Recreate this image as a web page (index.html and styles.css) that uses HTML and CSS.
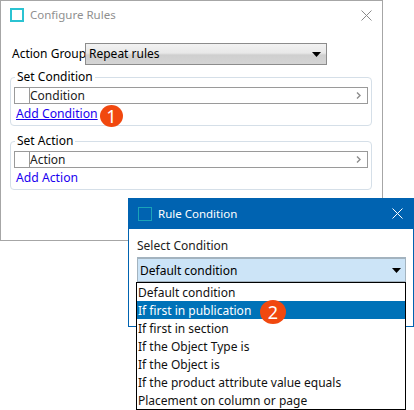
FILE: index.html
```html
<!DOCTYPE html>
<html lang="en">
<head>
<meta charset="utf-8">
<title>Configure Rules</title>
<link rel="stylesheet" href="styles.css">
</head>
<body>
<section class="window rules">
  <header class="titlebar">
    <span class="app-icon"></span>
    <span class="title">Configure Rules</span>
    <svg class="close" viewBox="0 0 11 11" width="11" height="11"><path d="M.5.5l10 10M10.5.5l-10 10" stroke="#8a8a8a" fill="none"/></svg>
  </header>
  <div class="content">
    <div class="group-row">
      <span class="group-label">Action Group</span>
      <div class="combo">
        <span>Repeat rules</span>
        <svg class="arrow" viewBox="0 0 9 5" width="9" height="5"><path d="M0 0h9L4.500 5z" fill="#000"/></svg>
      </div>
    </div>
    <fieldset class="set">
      <legend>Set Condition</legend>
      <div class="rule-row">
        <span class="cell"></span>
        <span class="rule-name">Condition</span>
        <svg class="chev" viewBox="0 0 5 7" width="5" height="7"><path d="M1 .5L4 3.500 1 6.500" stroke="#8c8c8c" stroke-width="1.400" fill="none"/></svg>
      </div>
      <a class="add underlined" href="#">Add Condition</a>
    </fieldset>
    <fieldset class="set">
      <legend>Set Action</legend>
      <div class="rule-row">
        <span class="cell"></span>
        <span class="rule-name">Action</span>
        <svg class="chev" viewBox="0 0 5 7" width="5" height="7"><path d="M1 .5L4 3.500 1 6.500" stroke="#8c8c8c" stroke-width="1.400" fill="none"/></svg>
      </div>
      <a class="add" href="#">Add Action</a>
    </fieldset>
  </div>
  <span class="badge badge-one">1</span>
</section>
<section class="window condition">
  <header class="titlebar blue">
    <span class="app-icon dark"></span>
    <span class="title">Rule Condition</span>
    <svg class="close" viewBox="0 0 11 11" width="11" height="11"><path d="M.5.500l10 10M10.500.500l-10 10" stroke="#fff" fill="none"/></svg>
  </header>
  <div class="condition-body">
    <div class="select-label">Select Condition</div>
    <div class="select-box">
      <span>Default condition</span>
      <svg class="arrow" viewBox="0 0 9 5" width="9" height="5"><path d="M0 0h9L4.500 5z" fill="#000"/></svg>
    </div>
  </div>
</section>
<ul class="dropdown">
  <li>Default condition</li>
  <li class="selected">If first in publication<span class="badge badge-two">2</span></li>
  <li>If first in section</li>
  <li>If the Object Type is</li>
  <li>If the Object is</li>
  <li>If the product attribute value equals</li>
  <li>Placement on column or page</li>
</ul>
</body>
</html>
```
FILE: styles.css
```css
* { box-sizing: border-box; }
html, body { margin: 0; padding: 0; }
body {
  position: relative;
  width: 414px;
  height: 410px;
  overflow: hidden;
  background: #fff;
  font: 12px/16px "Noto Sans", "Open Sans", sans-serif;
  color: #000;
}
.window { position: absolute; background: #fff; }
.rules {
  left: 0;
  top: 0;
  width: 383px;
  height: 241px;
  border: 1px solid #a6a6a6;
}
.titlebar {
  display: flex;
  align-items: center;
  height: 28px;
  padding: 0 9px;
  color: #8f8f8f;
}
.app-icon {
  width: 14px;
  height: 14px;
  border: 2px solid #2bc3d2;
  margin-right: 6px;
}
.app-icon.dark { border: 1px solid #1aa3b8; }
.title { flex: 1; font-size: 11.5px; }
.close { margin-right: 1px; }
.content { padding: 14px 9px 0; }
.group-row { display: flex; align-items: center; padding-left: 2px; }
.group-label { width: 73px; flex: none; white-space: nowrap; }
.combo {
  display: flex;
  align-items: center;
  justify-content: space-between;
  width: 242px;
  height: 22px;
  padding: 0 5px 0 3px;
  border: 1px solid #8c8c8c;
  background: linear-gradient(#f2f2f2, #e8e8e8 45%, #cfcfcf 55%, #d4d4d4);
}
.set {
  width: 362px;
  height: 56px;
  margin: 5px 0 0;
  padding: 3px 3px 0;
  border: 1px solid #d5dfe8;
  border-radius: 4px;
}
.set + .set { margin-top: 8px; }
legend { padding: 0 2px; margin-left: 1px; line-height: 14px; }
.rule-row {
  display: flex;
  align-items: center;
  height: 17px;
  border: 1px solid #9a9a9a;
}
.cell { width: 15px; height: 100%; border-right: 1px solid #9a9a9a; }
.rule-name { flex: 1; color: #222; }
.chev { margin-right: 6px; }
.add {
  display: block;
  margin: 1px 0 0 2px;
  font-size: 12.2px;
  line-height: 18px;
  color: #1a00f0;
  text-decoration: none;
}
.add.underlined { text-decoration: underline; }
.badge {
  position: absolute;
  display: flex;
  align-items: center;
  justify-content: center;
  border-radius: 50%;
  background: #f1480f;
  color: #fff;
}
.badge-one { left: 99px; top: 104px; width: 23px; height: 22px; font-size: 18px; }
.badge-two { left: 123px; top: -1px; width: 26px; height: 24px; font-size: 18px; }
.condition {
  left: 128px;
  top: 198px;
  width: 286px;
  height: 129px;
  border: 1px solid #0063b1;
}
.titlebar.blue {
  height: 30px;
  padding-bottom: 1px;
  background: #0063b1;
  color: #fff;
}
.condition-body { padding: 8px 7px 0 8px; }
.select-label { height: 20px; line-height: 18px; color: #222; }
.select-box {
  display: flex;
  align-items: center;
  justify-content: space-between;
  height: 25px;
  padding: 1px 4px 0 2px;
  border: 1px solid #a3b3bf;
  border-top-width: 2px;
  background: #cce4f7;
}
.dropdown {
  position: absolute;
  left: 136px;
  top: 282px;
  width: 270px;
  height: 128px;
  margin: 0;
  padding: 0;
  list-style: none;
  background: #fff;
  border: 1px solid #000;
}
.dropdown li {
  position: relative;
  height: 18px;
  line-height: 20px;
  padding-left: 1px;
  color: #111;
}
.dropdown .selected { background: #0072b8; color: #fff; }
```
